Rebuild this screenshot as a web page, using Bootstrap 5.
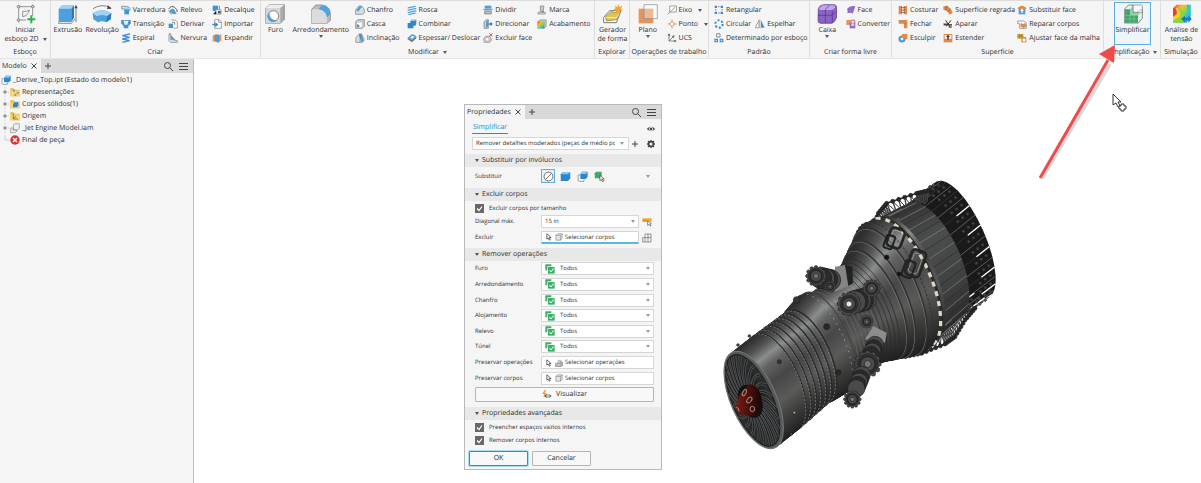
<!DOCTYPE html>
<html lang="pt-BR">
<head>
<meta charset="utf-8">
<meta name="viewport" content="width=device-width, initial-scale=1">
<title>_Derive_Top.ipt</title>
<link href="https://cdn.jsdelivr.net/npm/bootstrap@5.3.0/dist/css/bootstrap.min.css" rel="stylesheet">
<style>
:root{--ink:#2e2e2e;--panel:#f5f5f5;--strip:#d9d9d9;--accent:#5bb8e0}
body{font-family:"Open Sans","Noto Sans",sans-serif;font-size:7px;line-height:9px;color:var(--ink);background:#fff;text-rendering:geometricPrecision}
button,input,select{font:inherit;color:inherit;text-rendering:inherit}
button{background:none;border:0;padding:0}
svg{display:block;flex:none}
.ribbon{display:grid;grid-template-columns:51fr 210fr 334fr 35fr 79fr 101fr 82fr 212fr 57fr 40fr;background:var(--panel);border-top:1px solid #dcdcdc;border-bottom:1px solid #e6e6e6;white-space:nowrap}
.pane{display:flex;flex-direction:column;border-right:1px solid #dedede;min-width:0}
.pane:last-child{border-right:0}
.pane-body{display:grid;height:45px;padding-left:1px}
.pane-body>*{min-width:0}
.g-create{grid-template-columns:32fr 37fr 48fr 44fr 48fr}
.g-modify{grid-template-columns:27fr 64fr 52fr 77fr 54fr 59fr}
.g-work{grid-template-columns:34fr 44fr}
.g-free{grid-template-columns:33fr 48fr}
.g-surface{grid-template-columns:46fr 75fr 89fr}
.pane-name{height:12px;line-height:13px;text-align:center}
.tool-lg{display:flex;flex-direction:column;align-items:center;padding-top:3px;width:100%}
.tool-lg svg.ic{width:20px;height:20px;margin-bottom:2px}
.tools{display:grid;grid-template-rows:repeat(3,14px);padding:2px 0 0 2px}
.g-create .tools{padding-left:0}
.tool{display:flex;align-items:center;gap:2px}
.tool svg.ic{width:10px;height:10px}
.pattern{padding-left:4px}
.chosen{border:1px solid #62aed6;background:#eef5f9;width:37px;height:43px;margin:1px auto 0;padding-top:1px}
.caret{width:4px;height:3px;fill:#555}
.side{flex:0 0 194px;background:var(--panel);border-right:1px solid #bdbdbd;min-height:calc(100vh - 59px)}
.tabs{background:var(--strip);height:14px;padding-right:4px;gap:2px}
.tab{background:var(--panel);height:100%;padding:0 2px;gap:2px}
.glyph{width:10px;height:10px;fill:none;stroke:#444;stroke-width:1}
.tree{list-style:none;margin:0;padding:1px 0 0 1px}
.tree li{height:12px;display:flex;align-items:center;gap:2px}
.tree li>svg{width:10px;height:10px}
.tree li>svg.exp{width:8px;margin-right:-1px}
.stage{position:relative;flex:1 1 auto;overflow:hidden}
.engine{position:absolute;left:521px;top:111px;width:290px;height:290px}
.arrow{position:absolute;right:80px;top:42px;width:90px;height:140px;z-index:3}
.cursor{position:absolute;right:74px;top:34px;width:16px;height:20px}
.props{position:absolute;left:270px;top:45px;width:198px;background:var(--panel);border:1px solid #b9b9b9;font-size:6px;padding-bottom:3px}
.props .tabs,.props h2{font-size:7px}
.props h2{background:#e8e8e8;margin:0;height:13px;font-weight:400;line-height:13px;padding-left:10px;display:flex;align-items:center;gap:3px}
.crumbs{padding:4px 5px 3px 7px}
.preset{padding:0 5px 4px 7px}
.preset .box{flex:1 1 auto;margin-right:1px;padding-right:4px}
.preset .set{margin-left:6px}
.field{display:grid;grid-template-columns:66px 1fr;align-items:center;padding:0 7px 0 10px}
.gap-row{margin-bottom:3px}
.swap{padding-top:2px;padding-bottom:5px}
.look{padding:1px 7px 5px 10px}
.box{display:flex;align-items:center;background:#fff;border:1px solid #d6d6d6;height:13px;padding:0 3px;gap:5px;min-width:0;width:100%;text-align:left}
.box select,.box input{border:0;outline:0;padding:0;background:none;appearance:none;flex:1 1 0;min-width:0;height:9px;line-height:9px}
.box .caret,.dim{fill:#999}
.box svg.ic{width:10px;height:10px}
button.box{gap:2px}
button.box svg.ic{width:8px}
.narrow{display:grid;grid-template-columns:98px 1fr;align-items:center;gap:3px}
.narrow svg.ic,.crumbs svg.ic,.preset svg.ic{width:10px;height:10px}
.active-box{border-bottom:2px solid var(--accent)}
.ops{display:grid;grid-auto-rows:1fr;min-height:125px}
.modes{gap:3px}
.modes button{width:14px;height:14px;display:grid;place-items:center}
.modes button svg{width:11px;height:11px}
.modes .on{border:1px solid #62aed6;background:#e3f1f8}
.tick{appearance:none;width:9px;height:9px;margin:0;background:#686868 url("data:image/svg+xml,%3Csvg xmlns='http://www.w3.org/2000/svg' viewBox='0 0 9 9'%3E%3Cpath d='M2 4.5l2 2 3-4' fill='none' stroke='%23fff' stroke-width='1.2'/%3E%3C/svg%3E")}
.checks{padding-top:1px}
.checks label{display:flex;align-items:center;gap:5px;height:13px;padding-left:10px}
.btn-line{border:1px solid #b5b5b5;border-radius:1px;height:15px;background:#f8f8f8;font-size:7px;line-height:9px}
.foot{padding:4px 0 0 4px;gap:4px}
.foot .btn-line{width:59px}
.foot .main{border:1px solid #4389ad;box-shadow:0 0 0 1px #a8dcf3}
.crumb{color:#2b8fc4;border-bottom:1px solid #2b8fc4;text-decoration:none;font-size:7px;line-height:10px;padding:0 1px}
</style>
</head>
<body>
<svg width="0" height="0" class="position-absolute" aria-hidden="true">
<defs>
<linearGradient id="rainbow" x1="0" y1="0" x2="1" y2="1"><stop offset="0" stop-color="#e33"/><stop offset=".3" stop-color="#fb3"/><stop offset=".55" stop-color="#7d4"/><stop offset=".8" stop-color="#2bd"/><stop offset="1" stop-color="#26c"/></linearGradient>
<symbol id="sketch" viewBox="0 0 60 60"><g fill="none" stroke="#666" stroke-width="2"><path d="M8 2v54M50 2v34M2 8h54M2 48h28"/><path d="M20 38V22q14 2 20-4-4 18-20 20"/></g><g fill="#fff" stroke="#666" stroke-width="2"><path d="M5 5h6v6H5zM47 5h6v6h-6zM5 45h6v6H5z"/></g><path d="M46 34v24M34 46h24" stroke="#2eb052" stroke-width="6"/></symbol>
<symbol id="extrude" viewBox="0 0 60 60"><path d="M2 14L12 3h36L40 14z" fill="#9fd3f3"/><path d="M2 14h38v40H2z" fill="#4f9fdc"/><path d="M40 14l8-11v38l-8 13z" fill="#2f78b5"/><path d="M54 54V10" stroke="#444" stroke-width="2"/><path d="M49 13l5-11 5 11z" fill="#444"/><path d="M2 54v4h38l11-13" stroke="#555" stroke-width="2" fill="none"/></symbol>
<symbol id="revolve" viewBox="0 0 60 60"><path d="M3 14Q30-3 57 12" fill="none" stroke="#444" stroke-width="2"/><path d="M48 4l11 10-14 1z" fill="#444"/><path d="M2 28q28-18 56 0l-2 18-14 9q-12-7-24 0L4 46z" fill="#4f9fdc"/><path d="M2 28q28-18 56 0l-13 9q-15-8-30 0z" fill="#9fd3f3"/><path d="M45 37l13-9-2 18-14 9z" fill="#2f78b5"/></symbol>
<symbol id="hole" viewBox="0 0 60 60"><path d="M2 12L13 2h45v44L46 58H2z" fill="#aaa" stroke="#777" stroke-width="2"/><path d="M2 12h44v46H2z" fill="#d6d6d6"/><path d="M2 12L13 2h45L46 12z" fill="#eee"/><circle cx="25" cy="36" r="16" fill="#fff" stroke="#555" stroke-width="2"/><path d="M14 25a16 16 0 1 0 22 23 19 19 0 0 1-22-23" fill="#4f9fdc"/></symbol>
<symbol id="fillet" viewBox="0 0 60 60"><path d="M2 16L14 3h20q24 4 24 28v18l-10 9H2z" fill="#bdbdbd" stroke="#777" stroke-width="2"/><path d="M2 16h22q22 4 24 26v16H2z" fill="#dcdcdc"/><path d="M22 15L34 3q24 4 24 28l-10 9Q44 18 22 15" fill="#4ea5e2"/></symbol>
<symbol id="shapegen" viewBox="0 0 60 60"><path d="M2 40l18-20h34L40 56H2z" fill="#fff" stroke="#777" stroke-width="3"/><path d="M8 38l16-15 24 4-8 20-30 4z" fill="#d9c455" stroke="#7f7430" stroke-width="2"/><path d="M10 40l30 2 8-14" stroke="#fff3a8" stroke-width="3" fill="none"/><path d="M46 0l3 9 9-4-4 9 6 4-9 2 1 9-7-6-7 6 1-9-9-2 8-5-3-8 8 4z" fill="#f6a623"/></symbol>
<symbol id="plane" viewBox="0 0 60 60"><path d="M2 14h44v44H2z" fill="#e2955f"/><path d="M18 2h40v42H18z" fill="#fff" fill-opacity=".35" stroke="#888" stroke-width="2"/></symbol>
<symbol id="freebox" viewBox="0 0 60 60"><path d="M4 14Q8 3 20 2h32q7 2 7 8v30q-3 12-14 18H10q-7-2-7-8z" fill="#8a63c4" stroke="#4d3384" stroke-width="2"/><path d="M6 16Q10 5 20 4h30q6 2 5 6l-8 8H8z" fill="#c2a5ec"/><path d="M3 34h42l14-13M25 17v40M46 18v38M25 17l12-14" stroke="#4d3384" stroke-width="2" fill="none"/></symbol>
<symbol id="simplify" viewBox="0 0 60 60"><path d="M5 15L17 3h13v24h10L52 17h6v26L46 57H5z" fill="#e8f4ec" stroke="#555" stroke-width="2"/><path d="M6 16h15v18h24v22H6z" fill="#3da765"/><path d="M21 16l9-9v20l-9 7zM21 34l9-7h22l-7 7z" fill="#8fd3a8"/><path d="M30 3h26l2 2v20H30z" fill="#fff" fill-opacity=".5" stroke="#777" stroke-width="2"/><path d="M6 34h15M6 45h39M21 34v22M33 34v22" stroke="#c9efd5" stroke-width="1"/></symbol>
<symbol id="stress" viewBox="0 0 60 60"><path d="M3 12L14 2h42v36L44 56H3z" fill="url(#rainbow)"/><path d="M3 12h20q18 12 10 44H3z" fill="#8fd43a"/><path d="M3 12h12q14 12 8 26L3 50z" fill="#f8cf35"/><path d="M3 12h7q8 12 2 20L3 38z" fill="#e9402f"/><path d="M44 2h12v34H40q8-16 4-34" fill="#2fc4e0"/><path d="M27 45l12-10v6h10v-7l10 11-10 11v-7H39v6z" fill="#1976c9"/></symbol>

<symbol id="sweep" viewBox="0 0 30 30"><path d="M2 4h14q10 0 12 9l-4 5H12v-6H2z" fill="#bfe0f5" stroke="#777" stroke-width="2"/><path d="M10 13h14v15H10z" fill="#3f94d8"/><path d="M10 13l4-5h14l-4 5z" fill="#9fd3f3"/></symbol>
<symbol id="loft" viewBox="0 0 30 30"><path d="M2 3h26v12l-6 6v7H8v-7l-6-6z" fill="#3f94d8"/><path d="M7 5h16l-4 12h-8z" fill="#dff0fa"/><path d="M2 3v12M28 3v12" stroke="#777" stroke-width="2"/></symbol>
<symbol id="coil" viewBox="0 0 30 30"><path d="M27 3L4 8l22 5L4 18l22 5L4 28" fill="none" stroke="#3f8fd0" stroke-width="4"/></symbol>
<symbol id="emboss" viewBox="0 0 30 30"><path d="M2 12Q10 0 20 7q8 6 8 14" fill="none" stroke="#555" stroke-width="3"/><path d="M4 18q6-10 14-5l8 14H14z" fill="#4b9fdd"/><path d="M2 16l8 12" stroke="#555" stroke-width="2"/></symbol>
<symbol id="derive" viewBox="0 0 30 30"><path d="M10 3h12l6 6v18H16" fill="#fff" stroke="#777" stroke-width="2"/><path d="M2 14h13v13H2z" fill="#3f94d8"/><path d="M12 10h8v7" fill="none" stroke="#444" stroke-width="2"/></symbol>
<symbol id="rib" viewBox="0 0 30 30"><path d="M3 2h5v17l20 4v5H8l-5-5z" fill="#e6e6e6" stroke="#777" stroke-width="2"/><path d="M9 6l14 16-14-3z" fill="#4b9fdd"/></symbol>
<symbol id="decal" viewBox="0 0 30 30"><path d="M2 2h16v16H2z" fill="#3f94d8"/><path d="M10 14h17v13H10z" fill="#eee" stroke="#777" stroke-width="2"/><path d="M4 27h8v-8M22 2v10" stroke="#444" stroke-width="2"/><path d="M18 18h8v7h-8z" fill="#555"/></symbol>
<symbol id="import" viewBox="0 0 30 30"><path d="M8 2h13l7 7v19H8z" fill="#fff" stroke="#777" stroke-width="2"/><path d="M20 2v8h8" fill="none" stroke="#777" stroke-width="2"/><path d="M1 14h9V9l9 8-9 8v-6H1z" fill="#3386c8"/></symbol>
<symbol id="unwrap" viewBox="0 0 30 30"><path d="M2 8l9-5v20l-9 4zM19 8l9-5v20l-9 4z" fill="#e0965e"/><path d="M9 8q6-6 12-2v22q-6 0-12-3z" fill="#4b9fdd" stroke="#777"/></symbol>
<symbol id="chamfer" viewBox="0 0 30 30"><path d="M2 14L12 3h8l8 10v10l-6 5H2z" fill="#ddd" stroke="#777" stroke-width="2"/><path d="M4 16L14 3h8L10 20z" fill="#4b9fdd"/></symbol>
<symbol id="shell" viewBox="0 0 30 30"><path d="M2 8l6-6h20v20l-6 6H2z" fill="#ccc" stroke="#777" stroke-width="2"/><path d="M6 11h14v14H6z" fill="#fff"/><path d="M6 25V15l7 4v6z" fill="#3f94d8"/></symbol>
<symbol id="draft" viewBox="0 0 30 30"><path d="M3 14L12 3h8l8 18-6 7H2z" fill="#ddd" stroke="#777" stroke-width="2"/><path d="M12 6l8-3 6 22-7 2z" fill="#4b9fdd"/><path d="M15 2v26" stroke="#444" stroke-width="2" stroke-dasharray="3 2"/></symbol>
<symbol id="thread" viewBox="0 0 30 30"><path d="M4 4h20v4l4 4-4 4 4 4-4 7H4z" fill="#d7ecf8"/><path d="M2 9l24-5M2 16l26-6M2 23l26-6M4 29l22-5" stroke="#3f94d8" stroke-width="3"/></symbol>
<symbol id="combine" viewBox="0 0 30 30"><path d="M2 12h8V6l4-4h14v14l-4 4h-5v8H2z" fill="#2f86cc"/><path d="M10 6l4-4h14l-4 4z" fill="#8cc6ee"/></symbol>
<symbol id="thicken" viewBox="0 0 30 30"><path d="M2 14L16 3l12 6-13 12z" fill="#4b9fdd"/><path d="M2 14v5l13 9 13-12V9L15 21z" fill="#777"/><path d="M10 13l7-5 5 3-7 6z" fill="#fff"/></symbol>
<symbol id="split" viewBox="0 0 30 30"><path d="M5 2h20v9H5z" fill="#4b9fdd"/><path d="M5 18h20v9H5z" fill="#bbb" stroke="#777" stroke-width="2"/><path d="M1 14h28" stroke="#3f94d8" stroke-width="3"/></symbol>
<symbol id="direct" viewBox="0 0 30 30"><path d="M3 8l7-6h6v26H3z" fill="#ccc" stroke="#777" stroke-width="2"/><path d="M9 8l7-6v20l-7 6z" fill="#4b9fdd"/><path d="M18 13h5V8l6 7-6 7v-5h-5z" fill="#2c75ad"/></symbol>
<symbol id="delface" viewBox="0 0 30 30"><path d="M2 16l6-6h12l4 6v8l-4 4H4z" fill="#d5d5d5" stroke="#777" stroke-width="2"/><circle cx="13" cy="19" r="5" fill="#fff" stroke="#777"/><path d="M19 1l9 9M28 1l-9 9" stroke="#e23b3b" stroke-width="3"/></symbol>
<symbol id="mark" viewBox="0 0 30 30"><path d="M10 3h11l-3 16h-8z" fill="#ccc" stroke="#777" stroke-width="2"/><path d="M3 22h22v5H3z" fill="#eee" stroke="#777" stroke-width="2"/><circle cx="18" cy="20" r="3" fill="#3f94d8"/></symbol>
<symbol id="finish" viewBox="0 0 30 30"><path d="M2 8l6-6h20v20l-6 6H2z" fill="#bbb" stroke="#777"/><path d="M2 8h20v20H2z" fill="url(#rainbow)"/></symbol>
<symbol id="axis" viewBox="0 0 30 30"><path d="M8 3h20v18H8z" fill="#fff" stroke="#777" stroke-width="2"/><path d="M2 28L24 7" stroke="#d9854b" stroke-width="3"/></symbol>
<symbol id="point" viewBox="0 0 30 30"><path d="M15 1v28M1 15h28" stroke="#d9854b" stroke-width="2"/><path d="M15 7l8 8-8 8-8-8z" fill="#fff" stroke="#d9854b" stroke-width="3"/></symbol>
<symbol id="ucs" viewBox="0 0 30 30"><path d="M6 4v20h20M6 24L20 10" fill="none" stroke="#555" stroke-width="2"/><path d="M2 8l4-7 4 7zM22 20l7 4-7 4zM15 9l8-2-3 8z" fill="#555"/></symbol>
<symbol id="rect" viewBox="0 0 30 30"><g fill="#3a8acb"><path d="M2 2h7v7H2zM20 2h7v7h-7zM2 20h7v7H2zM20 20h7v7h-7z"/></g><path d="M12 5h5M5 12v5M24 12v5M12 24h5" stroke="#555" stroke-width="2"/></symbol>
<symbol id="circ" viewBox="0 0 30 30"><circle cx="15" cy="15" r="11" fill="none" stroke="#3a8acb" stroke-width="6" stroke-dasharray="6 5.500"/></symbol>
<symbol id="mirror" viewBox="0 0 30 30"><path d="M12 4v22H1z" fill="#fff" stroke="#777" stroke-width="2"/><path d="M18 4v22h11z" fill="#3f94d8"/><path d="M15 1v28" stroke="#444"/></symbol>
<symbol id="skpat" viewBox="0 0 30 30"><path d="M8 2h10v10H8z" fill="#fff" stroke="#555" stroke-width="2"/><path d="M1 17h11v11H1zM17 17h11v11H17z" fill="#3a8acb"/><path d="M4 20h5v5H4zM20 20h5v5h-5z" fill="#bfe0f5"/></symbol>
<symbol id="face" viewBox="0 0 30 30"><path d="M3 12Q12 0 28 4q-4 12-8 22-6-5-16-1 3-7-1-13" fill="#8f6bcb"/></symbol>
<symbol id="convert" viewBox="0 0 30 30"><path d="M1 3h16v15H1z" fill="#e0965e"/><path d="M11 11h17v17H11z" fill="#8f6bcb"/><path d="M16 5q10-6 11 6" stroke="#e23b3b" stroke-width="3" fill="none"/><circle cx="20" cy="17" r="5" fill="#d8c6f2"/></symbol>
<symbol id="stitch" viewBox="0 0 30 30"><path d="M2 3h10v25H2zM17 3h10v25H17z" fill="#dd8a50"/><path d="M9 8h12M9 15h12M9 22h12" stroke="#444" stroke-width="2"/></symbol>
<symbol id="patch" viewBox="0 0 30 30"><path d="M2 3h26v25H18V14H2z" fill="#dd8a50"/><path d="M18 14h10M18 3v11" stroke="#b5652d"/></symbol>
<symbol id="sculpt" viewBox="0 0 30 30"><circle cx="12" cy="18" r="10" fill="#4b9fdd" stroke="#2f78b5"/><path d="M12 3h16v16h-8L12 12z" fill="#dd8a50"/><circle cx="12" cy="18" r="4" fill="#fff"/></symbol>
<symbol id="ruled" viewBox="0 0 30 30"><path d="M1 4l11-2q14 8 17 22l-10 5Q14 16 1 14z" fill="#dd8a50"/><path d="M12 2L8 15M23 11l-9 9" stroke="#8d4d20" stroke-width="2"/></symbol>
<symbol id="trim" viewBox="0 0 30 30"><path d="M1 12h12v8H1zM17 18h10v9H17z" fill="#dd8a50"/><path d="M8 4l14 22M24 4L10 22M3 17h24" stroke="#333" stroke-width="3"/></symbol>
<symbol id="extend" viewBox="0 0 30 30"><path d="M2 3h26v25H2z" fill="#dd8a50"/><path d="M5 6h20v11H5z" fill="#fff"/><path d="M15 5l6 7h-4v8h-4v-8H9z" fill="#333"/></symbol>
<symbol id="replace" viewBox="0 0 30 30"><path d="M3 8Q15-4 27 8v4H3z" fill="#dd8a50"/><path d="M5 12h20v16H5z" fill="#4b9fdd"/><path d="M15 10l6 7h-4v7h-4v-7H9z" fill="#fff"/></symbol>
<symbol id="repair" viewBox="0 0 30 30"><path d="M2 6h18l8 6v16H8V14H2z" fill="#fff" stroke="#777" stroke-width="2"/><path d="M10 15l4-3 4 4 4-4 5 4v8l-8 3-8-4z" fill="#dd8a50"/></symbol>
<symbol id="mesh" viewBox="0 0 30 30"><path d="M1 3h18v14H1z" fill="#c9a531"/><path d="M1 10h18M8 3v14M14 3v14" stroke="#6c5717"/><path d="M13 12h15v16H13z" fill="#dd8a50"/><path d="M17 17h8v8h-8z" fill="#fff"/></symbol>

<symbol id="part" viewBox="0 0 30 30"><path d="M8 11H3v14l2 3h14v-5" fill="#fff" stroke="#777" stroke-width="2"/><path d="M9 8l5-6h15v14l-5 6H9z" fill="#2f86cc"/><path d="M9 8l5-6h15l-5 6z" fill="#8cc6ee"/></symbol>
<symbol id="folder" viewBox="0 0 30 30"><path d="M1 4h10l3 4h15v20H1z" fill="#eab840"/><path d="M1 10h28v18H1z" fill="#f9d674"/></symbol>
<symbol id="f-rep" viewBox="0 0 30 30"><use href="#folder"/><path d="M9 8h6v6H9zM20 14h6v6h-6zM13 21h6v6h-6z" fill="#8b9a94"/></symbol>
<symbol id="f-body" viewBox="0 0 30 30"><use href="#folder"/><path d="M9 14l4-4h12v10l-4 5H9z" fill="#2f86cc"/></symbol>
<symbol id="f-orig" viewBox="0 0 30 30"><use href="#folder"/><path d="M10 9v15h14M10 24l8-9" fill="none" stroke="#555" stroke-width="2"/></symbol>
<symbol id="asm" viewBox="0 0 30 30"><path d="M10 6l5-4h13v14l-5 5H10zM2 15h8v6h11v3l-5 5H2z" fill="#eee" stroke="#888" stroke-width="2"/></symbol>
<symbol id="eop" viewBox="0 0 30 30"><circle cx="15" cy="15" r="14" fill="#dc3131"/><path d="M9 9l12 12M21 9L9 21" stroke="#fff" stroke-width="4"/></symbol>
<symbol id="expand" viewBox="0 0 24 30"><path d="M12 9v12M6 15h12" stroke="#777" stroke-width="3"/><path d="M20 15h4M12 0v5M12 25v5" stroke="#bbb" stroke-width="2"/></symbol>
<symbol id="search" viewBox="0 0 10 10"><circle cx="4.500" cy="4.500" r="3"/><path d="M7 7l3 3"/></symbol>
<symbol id="menu" viewBox="0 0 10 10"><path d="M0 2.500h9M0 5.500h9M0 8.500h9"/></symbol>
<symbol id="close" viewBox="0 0 10 10"><path d="M2.500 2.500l5 5M7.500 2.500l-5 5"/></symbol>
<symbol id="plus" viewBox="0 0 10 10"><path d="M5 2v6M2 5h6"/></symbol>
<symbol id="down" viewBox="0 0 4 3"><path d="M0 0h4L2 3z"/></symbol>
<symbol id="eye" viewBox="0 0 30 30"><path d="M2 15Q15 2 28 15 15 28 2 15" fill="#555"/><circle cx="15" cy="15" r="6" fill="#fff"/><circle cx="15" cy="15" r="4" fill="#444"/></symbol>
<symbol id="gear" viewBox="0 0 30 30"><circle cx="15" cy="15" r="7" fill="none" stroke="#444" stroke-width="5"/><path d="M15 3v4M15 23v4M3 15h4M23 15h4M6 6l4 4M20 20l4 4M24 6l-4 4M6 24l4-4" stroke="#444" stroke-width="4"/></symbol>
<symbol id="none" viewBox="0 0 30 30"><circle cx="15" cy="15" r="12" fill="#fff" stroke="#666" stroke-width="2.500"/><path d="M7 23L23 7" stroke="#666" stroke-width="2.500"/></symbol>
<symbol id="cube" viewBox="0 0 30 30"><path d="M2 9l6-6h20v17l-6 7H2z" fill="#2f86cc"/><path d="M2 9l6-6h20l-6 6z" fill="#8cc6ee"/></symbol>
<symbol id="pickg" viewBox="0 0 30 30"><path d="M2 6l4-4h15v13l-4 5H2z" fill="#43a868"/><path d="M16 12v14l4-3 3 6 3-1-3-6h5z" fill="#fff" stroke="#444" stroke-width="2"/></symbol>
<symbol id="pick" viewBox="0 0 30 30"><path d="M7 3v20l5-4 4 8 4-2-4-8h7z" fill="#fff" stroke="#444" stroke-width="3"/></symbol>
<symbol id="wire" viewBox="0 0 30 30"><path d="M3 9l6-6h18v17l-6 7H3zM3 9h18v18M21 9l6-6" fill="#e4e4e4" stroke="#777" stroke-width="2"/></symbol>
<symbol id="feat" viewBox="0 0 30 30"><path d="M2 16h8l3-8h10l6 6v9l-5 5H2z" fill="#aaa" stroke="#777" stroke-width="2"/><path d="M11 4h10v11H11z" fill="#ccc" stroke="#888"/><path d="M6 22h14" stroke="#eee" stroke-width="3"/></symbol>
<symbol id="measure" viewBox="0 0 30 30"><path d="M1 4h28v10H1z" fill="#f2a52b"/><path d="M6 14v-4M12 14v-4" stroke="#7d5310" stroke-width="2"/><path d="M17 12v13l4-3 3 5 3-1-3-6h4z" fill="#fff" stroke="#555" stroke-width="2"/></symbol>
<symbol id="grid4" viewBox="0 0 30 30"><path d="M9 3h18v24H2V14h7zM18 3v24M9 14h18M9 14v13" fill="none" stroke="#666" stroke-width="2"/></symbol>
<symbol id="all" viewBox="0 0 30 30"><path d="M1 1h18v6H7v12H1z" fill="#3fae68"/><path d="M9 9h20v20H9z" fill="#3fae68"/><path d="M13 18l5 6 8-11" fill="none" stroke="#fff" stroke-width="3"/></symbol>
<symbol id="preview" viewBox="0 0 30 30"><path d="M8 0L1 12h6L3 22 14 9H8l4-9z" fill="#f39a1f"/><path d="M6 18Q17 6 29 18 17 30 6 18" fill="#555"/><circle cx="18" cy="18" r="5" fill="#fff"/><circle cx="18" cy="18" r="2" fill="#444"/></symbol>
</defs>
</svg>

<header class="ribbon">
  <section class="pane">
    <div class="pane-body"><button class="tool-lg"><svg class="ic"><use href="#sketch"/></svg><span>Iniciar</span><span class="d-flex align-items-center gap-1">esboço 2D<svg class="caret"><use href="#down"/></svg></span></button></div>
    <div class="pane-name">Esboço</div>
  </section>
  <section class="pane">
    <div class="pane-body g-create">
      <button class="tool-lg"><svg class="ic"><use href="#extrude"/></svg>Extrusão</button>
      <button class="tool-lg"><svg class="ic"><use href="#revolve"/></svg>Revolução</button>
      <div class="tools"><button class="tool"><svg class="ic"><use href="#sweep"/></svg>Varredura</button><button class="tool"><svg class="ic"><use href="#loft"/></svg>Transição</button><button class="tool"><svg class="ic"><use href="#coil"/></svg>Espiral</button></div>
      <div class="tools"><button class="tool"><svg class="ic"><use href="#emboss"/></svg>Relevo</button><button class="tool"><svg class="ic"><use href="#derive"/></svg>Derivar</button><button class="tool"><svg class="ic"><use href="#rib"/></svg>Nervura</button></div>
      <div class="tools"><button class="tool"><svg class="ic"><use href="#decal"/></svg>Decalque</button><button class="tool"><svg class="ic"><use href="#import"/></svg>Importar</button><button class="tool"><svg class="ic"><use href="#unwrap"/></svg>Expandir</button></div>
    </div>
    <div class="pane-name">Criar</div>
  </section>
  <section class="pane">
    <div class="pane-body g-modify">
      <button class="tool-lg"><svg class="ic"><use href="#hole"/></svg>Furo</button>
      <button class="tool-lg"><svg class="ic"><use href="#fillet"/></svg>Arredondamento<svg class="caret"><use href="#down"/></svg></button>
      <div class="tools"><button class="tool"><svg class="ic"><use href="#chamfer"/></svg>Chanfro</button><button class="tool"><svg class="ic"><use href="#shell"/></svg>Casca</button><button class="tool"><svg class="ic"><use href="#draft"/></svg>Inclinação</button></div>
      <div class="tools"><button class="tool"><svg class="ic"><use href="#thread"/></svg>Rosca</button><button class="tool"><svg class="ic"><use href="#combine"/></svg>Combinar</button><button class="tool"><svg class="ic"><use href="#thicken"/></svg>Espessar/ Deslocar</button></div>
      <div class="tools"><button class="tool"><svg class="ic"><use href="#split"/></svg>Dividir</button><button class="tool"><svg class="ic"><use href="#direct"/></svg>Direcionar</button><button class="tool"><svg class="ic"><use href="#delface"/></svg>Excluir face</button></div>
      <div class="tools"><button class="tool"><svg class="ic"><use href="#mark"/></svg>Marca</button><button class="tool"><svg class="ic"><use href="#finish"/></svg>Acabamento</button></div>
    </div>
    <button class="pane-name d-flex align-items-center justify-content-center gap-1">Modificar<svg class="caret"><use href="#down"/></svg></button>
  </section>
  <section class="pane">
    <div class="pane-body"><button class="tool-lg"><svg class="ic"><use href="#shapegen"/></svg><span>Gerador</span><span>de forma</span></button></div>
    <div class="pane-name">Explorar</div>
  </section>
  <section class="pane">
    <div class="pane-body g-work">
      <button class="tool-lg"><svg class="ic"><use href="#plane"/></svg>Plano<svg class="caret"><use href="#down"/></svg></button>
      <div class="tools"><button class="tool"><svg class="ic"><use href="#axis"/></svg>Eixo<svg class="caret ms-1"><use href="#down"/></svg></button><button class="tool"><svg class="ic"><use href="#point"/></svg>Ponto<svg class="caret ms-1"><use href="#down"/></svg></button><button class="tool"><svg class="ic"><use href="#ucs"/></svg>UCS</button></div>
    </div>
    <div class="pane-name">Operações de trabalho</div>
  </section>
  <section class="pane">
    <div class="pane-body"><div class="tools pattern"><button class="tool"><svg class="ic"><use href="#rect"/></svg>Retangular</button><div class="d-flex gap-1"><button class="tool"><svg class="ic"><use href="#circ"/></svg>Circular</button><button class="tool"><svg class="ic"><use href="#mirror"/></svg>Espelhar</button></div><button class="tool"><svg class="ic"><use href="#skpat"/></svg>Determinado por esboço</button></div></div>
    <div class="pane-name">Padrão</div>
  </section>
  <section class="pane">
    <div class="pane-body g-free">
      <button class="tool-lg"><svg class="ic"><use href="#freebox"/></svg>Caixa<svg class="caret"><use href="#down"/></svg></button>
      <div class="tools"><button class="tool"><svg class="ic"><use href="#face"/></svg>Face</button><button class="tool"><svg class="ic"><use href="#convert"/></svg>Converter</button></div>
    </div>
    <div class="pane-name">Criar forma livre</div>
  </section>
  <section class="pane">
    <div class="pane-body g-surface ps-1">
      <div class="tools"><button class="tool"><svg class="ic"><use href="#stitch"/></svg>Costurar</button><button class="tool"><svg class="ic"><use href="#patch"/></svg>Fechar</button><button class="tool"><svg class="ic"><use href="#sculpt"/></svg>Esculpir</button></div>
      <div class="tools"><button class="tool"><svg class="ic"><use href="#ruled"/></svg>Superfície regrada</button><button class="tool"><svg class="ic"><use href="#trim"/></svg>Aparar</button><button class="tool"><svg class="ic"><use href="#extend"/></svg>Estender</button></div>
      <div class="tools"><button class="tool"><svg class="ic"><use href="#replace"/></svg>Substituir face</button><button class="tool"><svg class="ic"><use href="#repair"/></svg>Reparar corpos</button><button class="tool"><svg class="ic"><use href="#mesh"/></svg>Ajustar face da malha</button></div>
    </div>
    <div class="pane-name">Superfície</div>
  </section>
  <section class="pane">
    <div class="pane-body"><button class="tool-lg chosen"><svg class="ic"><use href="#simplify"/></svg>Simplificar</button></div>
    <button class="pane-name d-flex align-items-center justify-content-center gap-1">Simplificação<svg class="caret"><use href="#down"/></svg></button>
  </section>
  <section class="pane">
    <div class="pane-body"><button class="tool-lg"><svg class="ic"><use href="#stress"/></svg><span>Análise de</span><span>tensão</span></button></div>
    <div class="pane-name">Simulação</div>
  </section>
</header>

<main class="d-flex">
  <aside class="side">
    <div class="tabs d-flex align-items-center">
      <div class="tab d-flex align-items-center">Modelo <button aria-label="Fechar"><svg class="glyph"><use href="#close"/></svg></button></div>
      <button aria-label="Adicionar"><svg class="glyph"><use href="#plus"/></svg></button>
      <button class="ms-auto me-1" aria-label="Pesquisar"><svg class="glyph"><use href="#search"/></svg></button>
      <button aria-label="Menu"><svg class="glyph"><use href="#menu"/></svg></button>
    </div>
    <ul class="tree">
      <li><svg><use href="#part"/></svg>_Derive_Top.ipt (Estado do modelo1)</li>
      <li><svg class="exp"><use href="#expand"/></svg><svg><use href="#f-rep"/></svg>Representações</li>
      <li><svg class="exp"><use href="#expand"/></svg><svg><use href="#f-body"/></svg>Corpos sólidos(1)</li>
      <li><svg class="exp"><use href="#expand"/></svg><svg><use href="#f-orig"/></svg>Origem</li>
      <li><svg class="exp"><use href="#expand"/></svg><svg><use href="#asm"/></svg>_Jet Engine Model.iam</li>
      <li><svg class="exp" viewBox="0 0 24 30"><path d="M12 0v15h12" fill="none" stroke="#bbb" stroke-width="2"/></svg><svg><use href="#eop"/></svg>Final de peça</li>
    </ul>
  </aside>

  <div class="stage">
    <svg class="engine" id="engine" viewBox="0 0 870 870" role="img" aria-label="Motor a jato"></svg>
    <svg class="cursor" viewBox="0 0 16 20"><path d="M2 1v11l3-2 2 4 2-1-2-4h3z" fill="#fff" stroke="#333"/><path d="M10 11h3v2h2v3h-2v2h-3v-2H8v-3h2z" fill="#fff" stroke="#333"/></svg>

    <form class="props" onsubmit="return false">
      <div class="tabs d-flex align-items-center">
        <div class="tab d-flex align-items-center">Propriedades <button type="button" aria-label="Fechar"><svg class="glyph"><use href="#close"/></svg></button></div>
        <button type="button" aria-label="Adicionar"><svg class="glyph"><use href="#plus"/></svg></button>
        <button type="button" class="ms-auto me-1" aria-label="Pesquisar"><svg class="glyph"><use href="#search"/></svg></button>
        <button type="button" aria-label="Menu"><svg class="glyph"><use href="#menu"/></svg></button>
      </div>
      <div class="crumbs d-flex align-items-center justify-content-between"><a href="#" class="crumb">Simplificar</a><button type="button" aria-label="Visibilidade"><svg class="ic"><use href="#eye"/></svg></button></div>
      <div class="preset d-flex align-items-center">
        <div class="box"><select aria-label="Predefinição"><option>Remover detalhes moderados (peças de médio porte)</option></select><svg class="caret"><use href="#down"/></svg></div>
        <button type="button" aria-label="Adicionar predefinição"><svg class="glyph"><use href="#plus"/></svg></button>
        <button type="button" class="set" aria-label="Configurações"><svg class="ic"><use href="#gear"/></svg></button>
      </div>
      <h2><svg class="caret"><use href="#down"/></svg>Substituir por invólucros</h2>
      <div class="field swap"><span>Substituir</span><div class="modes d-flex align-items-center"><button type="button" class="on" aria-label="Nenhum"><svg><use href="#none"/></svg></button><button type="button" aria-label="Invólucro"><svg><use href="#cube"/></svg></button><button type="button" aria-label="Ambos"><svg><use href="#part"/></svg></button><button type="button" aria-label="Selecionar"><svg><use href="#pickg"/></svg></button><svg class="caret dim ms-auto me-1"><use href="#down"/></svg></div></div>
      <h2><svg class="caret"><use href="#down"/></svg>Excluir corpos</h2>
      <div class="checks"><label><input type="checkbox" class="tick" checked>Excluir corpos por tamanho</label></div>
      <div class="field gap-row"><label for="diag">Diagonal máx.</label><div class="narrow"><div class="box"><input id="diag" type="text" value="15 in"><svg class="caret"><use href="#down"/></svg></div><button type="button" aria-label="Medir"><svg class="ic"><use href="#measure"/></svg></button></div></div>
      <div class="field mb-1"><span>Excluir</span><div class="narrow"><button type="button" class="box active-box"><svg class="ic"><use href="#pick"/></svg><svg class="ic"><use href="#wire"/></svg>Selecionar corpos</button><button type="button" aria-label="Grade"><svg class="ic"><use href="#grid4"/></svg></button></div></div>
      <h2><svg class="caret"><use href="#down"/></svg>Remover operações</h2>
      <div class="ops">
        <div class="field"><label for="o1">Furo</label><div class="box"><svg class="ic"><use href="#all"/></svg><select id="o1"><option>Todos</option></select><svg class="caret"><use href="#down"/></svg></div></div>
        <div class="field"><label for="o2">Arredondamento</label><div class="box"><svg class="ic"><use href="#all"/></svg><select id="o2"><option>Todos</option></select><svg class="caret"><use href="#down"/></svg></div></div>
        <div class="field"><label for="o3">Chanfro</label><div class="box"><svg class="ic"><use href="#all"/></svg><select id="o3"><option>Todos</option></select><svg class="caret"><use href="#down"/></svg></div></div>
        <div class="field"><label for="o4">Alojamento</label><div class="box"><svg class="ic"><use href="#all"/></svg><select id="o4"><option>Todos</option></select><svg class="caret"><use href="#down"/></svg></div></div>
        <div class="field"><label for="o5">Relevo</label><div class="box"><svg class="ic"><use href="#all"/></svg><select id="o5"><option>Todos</option></select><svg class="caret"><use href="#down"/></svg></div></div>
        <div class="field"><label for="o6">Túnel</label><div class="box"><svg class="ic"><use href="#all"/></svg><select id="o6"><option>Todos</option></select><svg class="caret"><use href="#down"/></svg></div></div>
        <div class="field"><span>Preservar operações</span><button type="button" class="box"><svg class="ic"><use href="#pick"/></svg><svg class="ic"><use href="#feat"/></svg>Selecionar operações</button></div>
        <div class="field"><span>Preservar corpos</span><button type="button" class="box"><svg class="ic"><use href="#pick"/></svg><svg class="ic"><use href="#wire"/></svg>Selecionar corpos</button></div>
      </div>
      <div class="look"><button type="button" class="btn-line w-100 d-flex align-items-center justify-content-center gap-1"><svg width="10" height="10"><use href="#preview"/></svg>Visualizar</button></div>
      <h2><svg class="caret"><use href="#down"/></svg>Propriedades avançadas</h2>
      <div class="checks"><label><input type="checkbox" class="tick" checked>Preencher espaços vazios internos</label><label><input type="checkbox" class="tick" checked>Remover corpos internos</label></div>
      <div class="foot d-flex"><button type="submit" class="btn-line main">OK</button><button type="button" class="btn-line">Cancelar</button></div>
    </form>
  </div>
</main>
<svg class="arrow" viewBox="0 0 90 140" aria-hidden="true"><path d="M11 136L79 22" stroke="#000" stroke-opacity=".15" stroke-width="4"/><path d="M9 136L77 18" stroke="#f04a4a" stroke-width="3"/><path d="M84 3L83 21 68 12z" fill="#f04a4a"/></svg>
<script>
// Draws the jet engine as a stack of shaded discs, rear to front.
(function(){
  var R=66*Math.PI/180,c=Math.cos(R),s=Math.sin(R),o=[];
  function pt(d,t){var u=d[2]*Math.cos(t),v=d[3]*Math.sin(t);return [d[0]+u*c-v*s,d[1]+u*s+v*c].map(function(n){return n.toFixed(1)})}
  function disc(d,fill,stroke,w,extra){o.push('<ellipse rx="'+d[2].toFixed(1)+'" ry="'+d[3].toFixed(1)+'" transform="translate('+d[0].toFixed(1)+' '+d[1].toFixed(1)+') rotate(66)" fill="'+fill+'" stroke="'+(stroke||'none')+'" stroke-width="'+(w||1)+'" '+(extra||'')+'/>')}
  function mix(a,b,k){return a.map(function(v,i){return v+(b[i]-v)*k})}
  function line(a,b,col,w){o.push('<path d="M'+a+'L'+b+'" stroke="'+col+'" stroke-width="'+w+'" fill="none"/>')}
  function dot(x,y,r,f,st){o.push('<circle cx="'+x+'" cy="'+y+'" r="'+r+'" fill="'+f+'" stroke="'+(st||'#1c1c1c')+'" stroke-width="2"/>')}
  function sweep(a,b,n,fill,col){for(var i=0;i<=n;i++)disc(mix(a,b,i/n),fill,col&&i%4==0?col:'none',2)}
  o.push('<defs><linearGradient id="metal"><stop offset="0" stop-color="#2c2c2b"/><stop offset=".1" stop-color="#555"/><stop offset=".19" stop-color="#8b8e8e"/><stop offset=".27" stop-color="#626362"/><stop offset=".42" stop-color="#474747"/><stop offset=".62" stop-color="#5a5a59"/><stop offset=".8" stop-color="#3c3c3b"/><stop offset="1" stop-color="#1f1f1f"/></linearGradient><linearGradient id="grate"><stop offset="0" stop-color="#333"/><stop offset=".3" stop-color="#4c4d4d"/><stop offset=".7" stop-color="#3f4040"/><stop offset="1" stop-color="#2a2a2a"/></linearGradient><radialGradient id="fan"><stop offset="0" stop-color="#0e0e0e"/><stop offset="1" stop-color="#303233"/></radialGradient><linearGradient id="hub"><stop offset="0" stop-color="#7b1d14"/><stop offset=".5" stop-color="#4a100b"/><stop offset="1" stop-color="#160606"/></linearGradient></defs>');
  var tail=[744,208,190,66],rim=[635,290,188,80],belt=[535,356,214,86],waist=[462,420,165,68],neck=[415,452,145,60],flange=[322,524,163,66],face=[116,690,157,68],i,k,t,a,b,q;
  // nozzle petals
  sweep(tail,rim,24,'#1a1a1a');
  for(i=0;i<34;i++){t=-Math.PI+i*Math.PI/17;a=pt(tail,t);b=pt(rim,t);line(a,b,i%2?'#5c5c5c':'#303030',3);
    if(i%2==0&&+a[0]>735)line(a,pt(mix(tail,rim,.4),t),'#fff',4);
    for(k=1;k<4;k++){q=pt(mix(tail,rim,k*.15),t+.09);dot(q[0],q[1],4,'#4a4a4a','#2a2a2a')}}
  // outer truss
  [[[640,62],[605,70],[515,100],[490,130],[470,180],[425,215]],[[780,415],[750,450],[720,500],[690,522],[620,550],[560,562]]].forEach(function(g){
    for(i=0;i<g.length-1;i++){line(g[i],g[i+1],'#2b2b2b',5);for(k=0;k<5;k++){var m=mix(g[i],g[i+1],k/5),n=mix(m,[610,310],.14);line(m,n,'#444',4);line(n,mix(g[i],g[i+1],(k+1)/5),'#333',3);dot(m[0],m[1],6,'#2a2a2a')}}});
  // rear casing
  var head=mix(tail,rim,.8);head[2]=190;head[3]=80;
  sweep(head,mix(rim,belt,.6),44,'url(#grate)');
  for(i=0;i<44;i++){t=-Math.PI+i*Math.PI/22;line(pt(head,t),pt(mix(rim,belt,.6),t),i%2?'#2b2b2b':'#858685',2)}
  sweep(mix(rim,belt,.55),belt,24,'url(#metal)');
  disc(mix(rim,belt,.7),'url(#metal)','#2b2b2b',12);
  disc(mix(rim,belt,.72),'url(#metal)','#dcd6c3',10,'stroke-dasharray="15 15"');
  sweep(mix(rim,belt,.8),belt,16,'url(#metal)');
  disc(belt,'url(#metal)','#2d2d2d',5,'stroke-dasharray="8 5"');
  sweep(belt,waist,30,'url(#metal)');
  [.15,.5,.75].forEach(function(k){disc(mix(belt,waist,k),'url(#metal)','#2f2f2f',4);disc(mix(belt,waist,k+.04),'url(#metal)','#808080',2);sweep(mix(belt,waist,k+.05),waist,20,'url(#metal)')});
  sweep(waist,neck,18,'url(#metal)','#2a2a2a');
  o.push('<g fill="none" stroke="#252525" stroke-width="8"><rect x="520" y="175" width="44" height="58" rx="12" transform="rotate(20 542 204)"/><rect x="580" y="240" width="44" height="80" rx="12" transform="rotate(20 602 280)"/></g><g fill="none" stroke="#aaa" stroke-width="2"><rect x="528" y="182" width="28" height="42" rx="8" transform="rotate(20 542 204)"/><rect x="588" y="250" width="28" height="60" rx="8" transform="rotate(20 602 280)"/></g><g fill="none" stroke="#222" stroke-width="6"><rect x="510" y="195" width="26" height="40" rx="6" transform="rotate(20 520 215)"/><rect x="566" y="272" width="30" height="50" rx="6" transform="rotate(20 580 296)"/></g>');
  dot(515,262,7,'#111');dot(552,312,6,'#111');
  sweep(neck,[350,500,145,60],24,'url(#metal)','#666');
  // gearbox modules
  function module(x,y,r,f){for(var j=0;j<12;j++)dot((x+r*Math.cos(j*.524)).toFixed(1),(y+r*Math.sin(j*.524)).toFixed(1),(r*.2).toFixed(1),'#4a4a4a');dot(x,y,r,'#2f2f2f','#555');dot(x,y,r*.65,'#4b4b4b','#111');dot(x,y,r*.3,f||'#777')}
  function stack(x,y,dx,dy,n,r){for(var j=0;j<n;j++){dot(x+dx*j,y+dy*j,r,j%2?'#2a2a2a':'#4a4a4a');if(j%2)o.push('<path d="M'+(x+dx*j-r*.5)+' '+(y+dy*j)+'h'+r+'" stroke="#7a1f1f" stroke-width="4"/>')}}
  o.push('<path d="M360 290l30-5 20 60-50 20z" fill="#848584"/><path d="M475 468l40 20-5 30-60-10z" fill="#8c8d8c"/><path d="M390 285l22 5 2 50-14 8z" fill="#222"/>');
  stack(345,330,-9,-2,4,32);module(303,318,26);module(345,350,14);
  // flange and front case
  disc([336,515,160,66],'url(#metal)','#444',4);
  disc(flange,'url(#metal)','#aaa',4,'stroke-dasharray="4 14"');
  sweep(flange,[285,555,155,66],16,'url(#metal)');
  sweep([285,555,150,66],[160,655,156,68],50,'url(#metal)');
  for(i=0;i<7;i++){var d=mix([280,560,150,66],[185,636,156,68],i/6);disc(d,'url(#metal)','#2a2a2a',4);disc(mix(d,face,.025),'url(#metal)','#8b8b8b',2,'stroke-dasharray="6 5"')}
  sweep([180,640,157,69],face,24,'url(#metal)');
  dot(335,470,9,'#292929');dot(370,607,8,'#292929');dot(193,575,6,'#333');dot(238,728,4,'#bbb');dot(69,525,4,'#555');dot(103,498,4,'#555');dot(229,792,4,'#555');dot(196,818,4,'#555');dot(245,390,10,'#333');
  stack(450,388,-8,2,5,34);module(402,402,30,'#e5e5e5');module(470,355,22);module(455,455,16);
  stack(480,525,-4,10,4,26);module(458,582,34);stack(440,615,-4,10,5,26);module(412,688,22);
  // intake fan
  disc(face,'#575858','#777',3);disc([113,691,148,60],'url(#fan)','#1b1b1b',3);
  var hub=[106,694,45,28];
  for(i=0;i<24;i++){t=i*Math.PI/12;a=pt(hub,t);b=pt([113,691,145,58],t+.35);k=pt([110,692,100,44],t+.02);o.push('<path d="M'+a+'Q'+k+' '+b+'" fill="none" stroke="#4c4e50" stroke-width="9"/><path d="M'+a+'Q'+k+' '+b+'" fill="none" stroke="#191a1b" stroke-width="3"/>')}
  disc([106,694,52,34],'#131313');
  o.push('<path d="M62 715Q66 670 105 642Q140 650 140 700Q138 735 100 738Q68 735 62 715" fill="url(#hub)"/><g fill="none" stroke="#a98d89" stroke-width="3"><ellipse cx="88" cy="668" rx="5" ry="10" transform="rotate(25 88 668)"/><ellipse cx="103" cy="690" rx="6" ry="10" transform="rotate(40 103 690)"/><ellipse cx="112" cy="717" rx="7" ry="8"/><path d="M64 712q8 0 8 12"/></g>');
  document.getElementById('engine').innerHTML=o.join('');
})();
</script>
<script src="https://cdn.jsdelivr.net/npm/bootstrap@5.3.0/dist/js/bootstrap.bundle.min.js"></script>
</body>
</html>
